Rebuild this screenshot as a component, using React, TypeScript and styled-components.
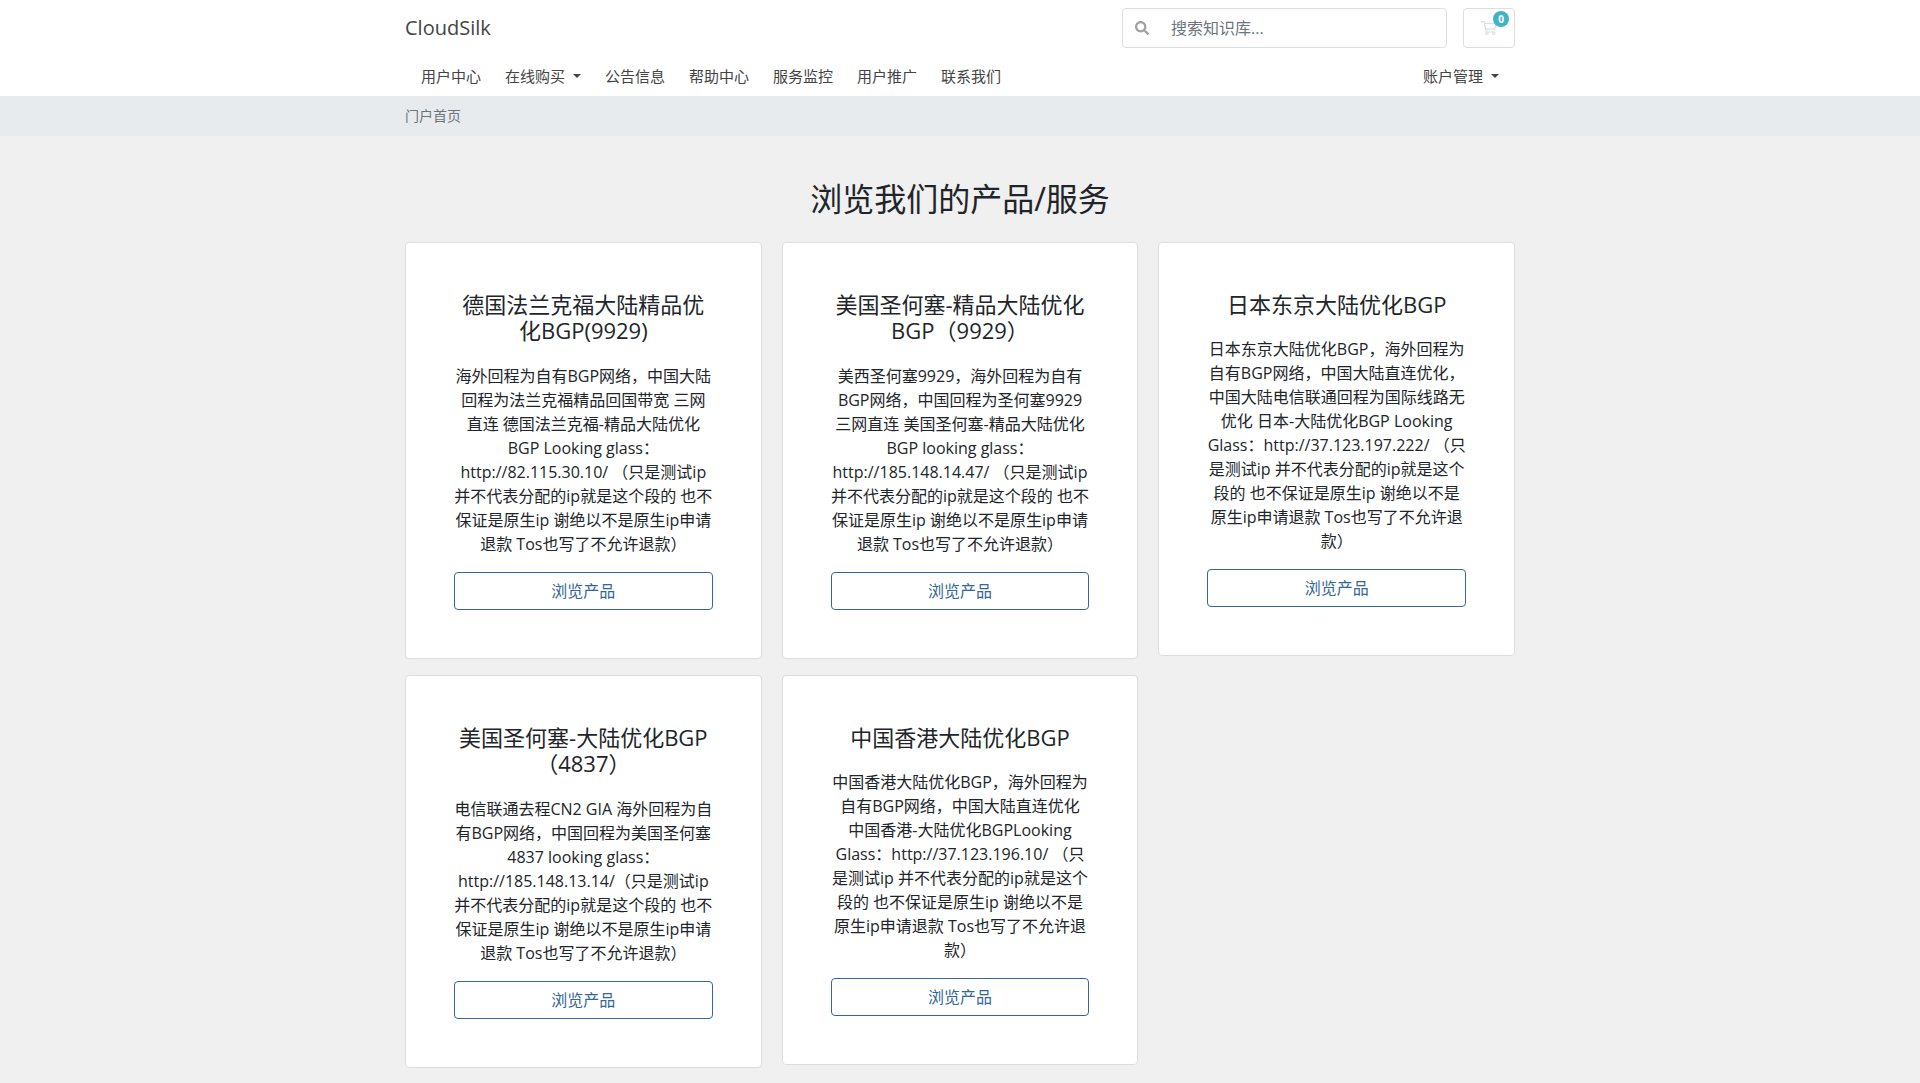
import React from "react";
import styled, { createGlobalStyle } from "styled-components";
import { FaSearch } from "react-icons/fa";

const GlobalStyle = createGlobalStyle`
  *, *::before, *::after { box-sizing: border-box; }
  body {
    margin: 0;
    background: #f0f0f0;
    color: #212529;
    font-family: "Open Sans", "Noto Sans CJK SC", sans-serif;
    font-size: 16px;
    line-height: 24px;
  }
`;

const Container = styled.div`
  width: 100%;
  max-width: 1140px;
  margin: 0 auto;
  padding: 0 15px;
`;

const Header = styled.header`
  background: #fff;
`;

const TopBar = styled(Container)`
  display: flex;
  align-items: center;
  gap: 16px;
  padding-top: 8px;
  padding-bottom: 8px;
`;

const Brand = styled.a`
  margin-right: auto;
  color: #444;
  font-size: 20px;
  text-decoration: none;
`;

const SearchForm = styled.form`
  display: flex;
  align-items: center;
  flex: 0 1 325px;
  height: 40px;
  border: 1px solid #ddd;
  border-radius: 4px;
  background: #fff;
`;

const SearchButton = styled.button`
  display: flex;
  align-items: center;
  padding: 0 12px;
  border: 0;
  background: transparent;
  color: #a0a0a0;
  font-size: 14px;
`;

const SearchInput = styled.input`
  flex: 1;
  min-width: 0;
  padding: 0 10px;
  border: 0;
  outline: 0;
  background: transparent;
  color: #495057;
  font: inherit;

  &::placeholder {
    color: #6c757d;
    opacity: 1;
  }
`;

const CartLink = styled.a`
  position: relative;
  display: flex;
  align-items: center;
  justify-content: center;
  width: 52px;
  height: 40px;
  border: 1px solid #ddd;
  border-radius: 4px;
  color: #ddd;
`;

const CartBadge = styled.span`
  position: absolute;
  top: 2px;
  right: 5px;
  width: 16px;
  height: 16px;
  border-radius: 8px;
  background: #41b3c7;
  color: #fff;
  font-size: 10px;
  font-weight: 700;
  line-height: 16px;
  text-align: center;
`;

const Nav = styled(Container).attrs({ as: "nav" })`
  display: flex;
  justify-content: space-between;
`;

const NavList = styled.ul`
  display: flex;
  gap: 24px;
  margin: 0;
  padding: 8px 16px;
  list-style: none;
`;

const NavLink = styled.a<{ $dropdown?: boolean }>`
  display: flex;
  align-items: center;
  gap: 8px;
  color: #444;
  font-size: 15px;
  text-decoration: none;

  &::after {
    display: ${(p) => (p.$dropdown ? "block" : "none")};
    content: "";
    border: 4px solid transparent;
    border-top-color: currentColor;
    border-bottom: 0;
  }
`;

const Breadcrumb = styled.nav`
  padding: 8px 0;
  background: #e7ebee;
  color: #6c757d;
  font-size: 14px;
`;

const Main = styled(Container).attrs({ as: "main" })`
  padding-top: 44px;
  padding-bottom: 40px;
`;

const PageTitle = styled.h2`
  margin: 0 0 24px;
  font-size: 32px;
  font-weight: 400;
  line-height: 38px;
  text-align: center;
`;

const CardGrid = styled.div`
  display: grid;
  grid-template-columns: repeat(3, minmax(0, 1fr));
  gap: 16px 20px;
  align-items: start;
`;

const Card = styled.article`
  padding: 48px;
  border: 1px solid #ddd;
  border-radius: 4px;
  background: #fff;
  text-align: center;
`;

const CardTitle = styled.h3`
  margin: 0 0 20px;
  font-size: 22px;
  font-weight: 400;
  line-height: 1.2;
`;

const CardText = styled.p`
  margin: 0 0 16px;
`;

const BrowseLink = styled.a`
  display: block;
  padding: 6px 12px;
  border: 1px solid #336699;
  border-radius: 4px;
  color: #336699;
  text-decoration: none;
`;

const navItems = [
  { label: "用户中心" },
  { label: "在线购买", dropdown: true },
  { label: "公告信息" },
  { label: "帮助中心" },
  { label: "服务监控" },
  { label: "用户推广" },
  { label: "联系我们" },
];

const products = [
  {
    title: "德国法兰克福大陆精品优化BGP(9929)",
    text: "海外回程为自有BGP网络，中国大陆回程为法兰克福精品回国带宽 三网直连 德国法兰克福-精品大陆优化BGP Looking glass：http://82.115.30.10/ （只是测试ip 并不代表分配的ip就是这个段的 也不保证是原生ip 谢绝以不是原生ip申请退款 Tos也写了不允许退款）",
  },
  {
    title: "美国圣何塞-精品大陆优化BGP（9929）",
    text: "美西圣何塞9929，海外回程为自有BGP网络，中国回程为圣何塞9929 三网直连 美国圣何塞-精品大陆优化BGP looking glass：http://185.148.14.47/ （只是测试ip 并不代表分配的ip就是这个段的 也不保证是原生ip 谢绝以不是原生ip申请退款 Tos也写了不允许退款）",
  },
  {
    title: "日本东京大陆优化BGP",
    text: "日本东京大陆优化BGP，海外回程为自有BGP网络，中国大陆直连优化，中国大陆电信联通回程为国际线路无优化 日本-大陆优化BGP Looking Glass：http://37.123.197.222/ （只是测试ip 并不代表分配的ip就是这个段的 也不保证是原生ip 谢绝以不是原生ip申请退款 Tos也写了不允许退款）",
  },
  {
    title: "美国圣何塞-大陆优化BGP（4837）",
    text: "电信联通去程CN2 GIA 海外回程为自有BGP网络，中国回程为美国圣何塞4837 looking glass：http://185.148.13.14/（只是测试ip 并不代表分配的ip就是这个段的 也不保证是原生ip 谢绝以不是原生ip申请退款 Tos也写了不允许退款）",
  },
  {
    title: "中国香港大陆优化BGP",
    text: "中国香港大陆优化BGP，海外回程为自有BGP网络，中国大陆直连优化 中国香港-大陆优化BGPLooking Glass：http://37.123.196.10/ （只是测试ip 并不代表分配的ip就是这个段的 也不保证是原生ip 谢绝以不是原生ip申请退款 Tos也写了不允许退款）",
  },
];

function CartIcon() {
  return (
    <svg width="16" height="14" viewBox="0 0 576 512" fill="currentColor" aria-hidden="true">
      <path d="M551.991 64H144.28l-8.726-44.608C133.35 8.128 123.478 0 112 0H12C5.373 0 0 5.373 0 12v24c0 6.627 5.373 12 12 12h80.24l69.594 355.701C150.796 415.201 144 430.802 144 448c0 35.346 28.654 64 64 64s64-28.654 64-64a63.681 63.681 0 0 0-8.583-32h145.167a63.681 63.681 0 0 0-8.583 32c0 35.346 28.654 64 64 64 35.346 0 64-28.654 64-64 0-17.993-7.435-34.24-19.388-45.868C506.022 391.891 496.76 384 485.328 384H206.89l-12.48-64h303.345c11.3 0 21.053-7.896 23.466-18.936l52.236-240C576.9 45.938 565.418 64 551.991 64zM464 424c13.234 0 24 10.766 24 24s-10.766 24-24 24-24-10.766-24-24 10.766-24 24-24zm-256 0c13.234 0 24 10.766 24 24s-10.766 24-24 24-24-10.766-24-24 10.766-24 24-24zm279.438-152H184.98l-31.31-160h368.548l-34.78 160z" />
    </svg>
  );
}

export default function App() {
  return (
    <>
      <GlobalStyle />
      <Header>
        <TopBar>
          <Brand href="#">CloudSilk</Brand>
          <SearchForm role="search" onSubmit={(e) => e.preventDefault()}>
            <SearchButton type="submit" aria-label="搜索">
              <FaSearch />
            </SearchButton>
            <SearchInput type="text" aria-label="搜索知识库" placeholder="搜索知识库..." />
          </SearchForm>
          <CartLink href="#cart" aria-label="购物车">
            <CartIcon />
            <CartBadge>0</CartBadge>
          </CartLink>
        </TopBar>
        <Nav>
          <NavList>
            {navItems.map((item) => (
              <li key={item.label}>
                <NavLink href="#" $dropdown={item.dropdown}>{item.label}</NavLink>
              </li>
            ))}
          </NavList>
          <NavList>
            <li>
              <NavLink href="#account" $dropdown>账户管理</NavLink>
            </li>
          </NavList>
        </Nav>
      </Header>
      <Breadcrumb>
        <Container>门户首页</Container>
      </Breadcrumb>
      <Main>
        <PageTitle>浏览我们的产品/服务</PageTitle>
        <CardGrid>
          {products.map((product) => (
            <Card key={product.title}>
              <CardTitle>{product.title}</CardTitle>
              <CardText>{product.text}</CardText>
              <BrowseLink href="#">浏览产品</BrowseLink>
            </Card>
          ))}
        </CardGrid>
      </Main>
    </>
  );
}
